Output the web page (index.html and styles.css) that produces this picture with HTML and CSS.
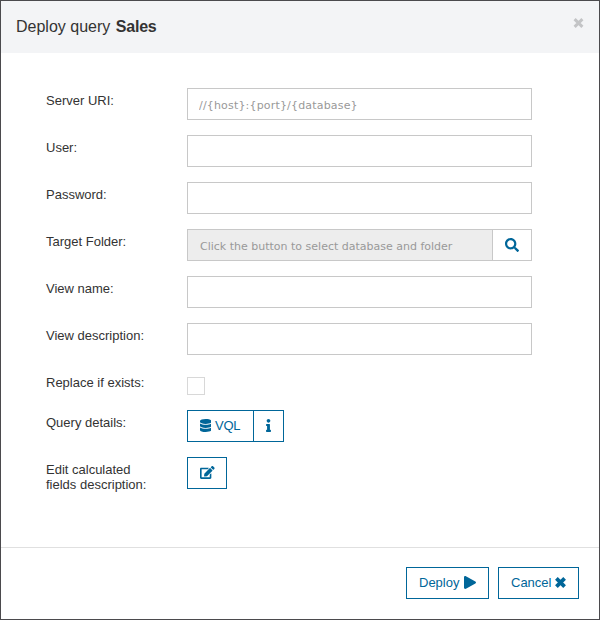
FILE: index.html
```html
<!DOCTYPE html>
<html lang="en">
<head>
<meta charset="utf-8">
<title>Deploy query</title>
<link rel="stylesheet" href="styles.css">
</head>
<body>
<div class="dialog">
  <header class="header">
    <h1 class="title">Deploy query <b>Sales</b></h1>
    <button class="close" aria-label="Close"><svg width="11" height="10" viewBox="0 0 11 10"><path d="M1.6 1.1L9.4 8.9M9.4 1.1L1.6 8.9"/></svg></button>
  </header>
  <main class="form">
    <div class="row"><label class="label">Server URI:</label><input class="field uri" placeholder="//{host}:{port}/{database}"></div>
    <div class="row"><label class="label">User:</label><input class="field"></div>
    <div class="row"><label class="label">Password:</label><input class="field" type="password"></div>
    <div class="row"><label class="label">Target Folder:</label>
      <div class="group">
        <input class="field readonly" readonly placeholder="Click the button to select database and folder">
        <button class="search" aria-label="Select"><svg width="14" height="14" viewBox="0 0 512 512"><path d="M505 442.7L405.3 343c-4.5-4.5-10.6-7-17-7H372c27.6-35.3 44-79.7 44-128C416 93.1 322.9 0 208 0S0 93.1 0 208s93.1 208 208 208c48.3 0 92.7-16.4 128-44v16.3c0 6.4 2.5 12.5 7 17l99.7 99.7c9.4 9.4 24.6 9.4 33.9 0l28.3-28.3c9.4-9.4 9.4-24.6.1-34zM208 336c-70.7 0-128-57.2-128-128 0-70.7 57.2-128 128-128 70.7 0 128 57.2 128 128 0 70.7-57.2 128-128 128z"/></svg></button>
      </div>
    </div>
    <div class="row"><label class="label">View name:</label><input class="field"></div>
    <div class="row"><label class="label">View description:</label><input class="field"></div>
    <div class="row row-check"><label class="label">Replace if exists:</label><input class="check" type="checkbox"></div>
    <div class="row"><label class="label">Query details:</label>
      <button class="btn vql"><svg width="11.4" height="13" viewBox="0 0 448 512"><path d="M448 73.143v45.714C448 159.143 347.667 192 224 192S0 159.143 0 118.857V73.143C0 32.857 100.333 0 224 0s224 32.857 224 73.143zM448 176v102.857C448 319.143 347.667 352 224 352S0 319.143 0 278.857V176c48.125 33.143 136.208 48.572 224 48.572S399.874 209.143 448 176zm0 160v102.857C448 479.143 347.667 512 224 512S0 479.143 0 438.857V336c48.125 33.143 136.208 48.572 224 48.572S399.874 369.143 448 336z"/></svg>VQL</button>
      <button class="btn info" aria-label="Info"><svg width="5" height="13" viewBox="0 0 192 512"><path d="M20 424.229h20V279.771H20c-11.046 0-20-8.954-20-20V212c0-11.046 8.954-20 20-20h112c11.046 0 20 8.954 20 20v212.229h20c11.046 0 20 8.954 20 20V492c0 11.046-8.954 20-20 20H20c-11.046 0-20-8.954-20-20v-47.771c0-11.046 8.954-20 20-20zM96 0C56.235 0 24 32.235 24 72s32.235 72 72 72 72-32.235 72-72S135.764 0 96 0z"/></svg></button>
    </div>
    <div class="row"><label class="label">Edit calculated fields description:</label>
      <button class="btn edit" aria-label="Edit"><svg width="14.6" height="13" viewBox="0 0 576 512"><path d="M402.6 83.2l90.2 90.2c3.8 3.8 3.8 10 0 13.8L274.4 405.6l-92.8 10.3c-12.4 1.4-22.9-9.1-21.5-21.5l10.3-92.8L388.8 83.2c3.8-3.8 10-3.8 13.8 0zm162-22.9l-48.8-48.8c-15.2-15.2-39.9-15.2-55.2 0l-35.4 35.4c-3.8 3.8-3.8 10 0 13.8l90.2 90.2c3.8 3.8 10 3.8 13.8 0l35.4-35.4c15.2-15.3 15.2-40 0-55.2zM384 346.2V448H64V128h229.8c3.2 0 6.2-1.3 8.5-3.5l40-40c7.6-7.6 2.2-20.5-8.5-20.5H48C21.5 64 0 85.5 0 112v352c0 26.5 21.5 48 48 48h352c26.5 0 48-21.5 48-48V306.2c0-10.7-12.9-16-20.5-8.5l-40 40c-2.2 2.3-3.5 5.3-3.5 8.5z"/></svg></button>
    </div>
  </main>
  <footer class="footer">
    <button class="btn deploy">Deploy<svg width="12" height="13" viewBox="0 0 448 512" preserveAspectRatio="none"><path d="M424.4 214.7L72.4 6.6C43.8-10.3 0 6.1 0 47.9V464c0 37.5 40.7 60.1 72.4 41.3l352-208c31.4-18.5 31.5-64.1 0-82.6z"/></svg></button>
    <button class="btn cancel">Cancel<svg class="cross" width="11" height="11" viewBox="0 0 11 11"><path d="M1.4 1.4L9.6 9.6M9.6 1.4L1.4 9.6"/></svg></button>
  </footer>
</div>
</body>
</html>
```
FILE: styles.css
```css
* { box-sizing: border-box; }
body {
  margin: 0;
  font: 13px/15px "Liberation Sans", Arial, sans-serif;
  color: #333;
}
.dialog {
  display: flex;
  flex-direction: column;
  width: 600px;
  height: 620px;
  border: 1px solid #4b4a4d;
  background: #fff;
}
.header {
  display: flex;
  justify-content: space-between;
  align-items: flex-start;
  height: 52px;
  padding: 16px 15px 0 15px;
  background: #f3f4f6;
}
.title {
  margin: 0;
  font-size: 16px;
  line-height: 20px;
  font-weight: normal;
}
.title b { margin-left: 1px; letter-spacing: -0.2px; }
button {
  margin: 0;
  font: inherit;
  border-radius: 0;
}
svg { display: block; flex: none; fill: currentColor; }
.close {
  margin-top: 1px;
  padding: 0;
  border: 0;
  background: none;
  color: #c3c4c6;
}
.close path, .cross path {
  fill: none;
  stroke: currentColor;
  stroke-width: 3;
}
.cross path { stroke-width: 3.8; }
.form {
  display: flex;
  flex-direction: column;
  gap: 15px;
  flex: 1;
  padding: 35px 67px 0 45px;
}
.row {
  display: flex;
  align-items: flex-start;
  height: 32px;
}
.row-check { height: 25px; }
.label {
  flex: none;
  width: 141px;
  padding: 5px 35px 0 0;
}
.field {
  flex: 1;
  min-width: 0;
  height: 32px;
  padding: 2px 11px 0;
  border: 1px solid #c8c8c8;
  border-radius: 0;
  background: #fff;
  outline: 0;
  font: 11px "DejaVu Sans", Verdana, sans-serif;
}
.field::placeholder { color: #999; opacity: 1; }
.uri { letter-spacing: 0.18px; }
.group { display: flex; flex: 1; }
.readonly { background: #ededed; padding-left: 12px; }
.search {
  display: flex;
  align-items: center;
  justify-content: center;
  width: 39px;
  height: 32px;
  padding: 0;
  border: 1px solid #c8c8c8;
  border-left: 0;
  background: #fff;
  color: #069;
}
.check {
  appearance: none;
  width: 18px;
  height: 18px;
  margin: 7px 0 0;
  border: 1px solid #d8d8d8;
}
.btn {
  display: flex;
  align-items: center;
  height: 32px;
  padding: 0 12px 2px;
  border: 1px solid #069;
  background: #fff;
  color: #069;
  white-space: nowrap;
}
.vql { width: 67px; gap: 4px; padding-left: 11.6px; letter-spacing: -0.2px; }
.info { width: 30px; border-left: 0; }
.edit { width: 40px; }
.footer {
  display: flex;
  justify-content: flex-end;
  gap: 9px;
  height: 72px;
  padding: 19px 20px 0 0;
  border-top: 1px solid #e0e0e0;
}
.deploy { width: 83px; gap: 5px; }
.cancel { width: 81px; gap: 4px; }
```
